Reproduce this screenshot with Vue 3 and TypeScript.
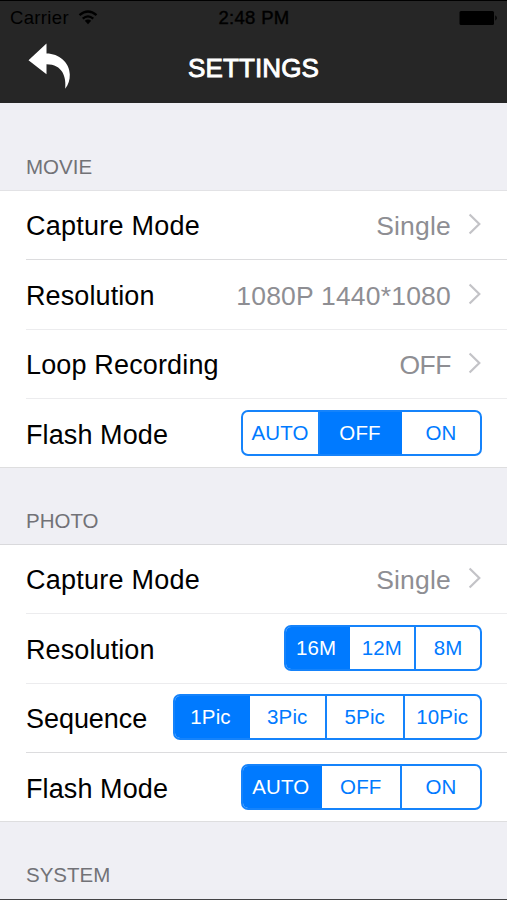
<script setup lang="ts">
import { reactive } from 'vue'

interface Row {
  label: string
  key: string
  value?: string
  options?: string[]
  selected?: number
  widths?: number[]
}

interface Section {
  title: string
  key: string
  rows: Row[]
}

const sections = reactive<Section[]>([
  {
    title: 'MOVIE',
    key: 'movie',
    rows: [
      { label: 'Capture Mode', key: 'capture', value: 'Single' },
      { label: 'Resolution', key: 'resolution', value: '1080P 1440*1080' },
      { label: 'Loop Recording', key: 'loop', value: 'OFF' },
      { label: 'Flash Mode', key: 'flash', options: ['AUTO', 'OFF', 'ON'], selected: 1, widths: [77, 82, 78] },
    ],
  },
  {
    title: 'PHOTO',
    key: 'photo',
    rows: [
      { label: 'Capture Mode', key: 'capture', value: 'Single' },
      { label: 'Resolution', key: 'resolution', options: ['16M', '12M', '8M'], selected: 0, widths: [64, 66.5, 64] },
      { label: 'Sequence', key: 'sequence', options: ['1Pic', '3Pic', '5Pic', '10Pic'], selected: 0, widths: [75, 77.5, 77.5, 75.5] },
      { label: 'Flash Mode', key: 'flash', options: ['AUTO', 'OFF', 'ON'], selected: 0, widths: [78.5, 80.5, 78] },
    ],
  },
])
</script>

<template>
  <main class="screen">
    <header class="header">
      <div class="status">
        <div class="carrier">
          <span>Carrier</span>
          <svg class="wifi" width="20" height="15" viewBox="0 0 20 15">
            <path d="M1.5 5.2Q10 -2.2 18.5 5.2M4.7 8.6Q10 4.2 15.3 8.6" fill="none" stroke="#000" stroke-width="2.3" />
            <path d="M6.8 10.8Q10 8.2 13.2 10.8L10 14.2Z" fill="#000" />
          </svg>
        </div>
        <span class="clock">2:48 PM</span>
        <svg class="battery" width="39" height="15" viewBox="0 0 39 15">
          <rect x="0.5" y="0" width="34.5" height="14" rx="1.5" />
          <path d="M36.3 4.3Q39.4 7 36.3 9.7Z" />
        </svg>
      </div>
      <div class="nav">
        <button class="back" aria-label="Back">
          <svg width="43" height="47" viewBox="0 0 43 47">
            <path d="M0.5 17.3 18.5 0.5V10.6C31 10.7 41.5 19.5 41.8 31.5C41.9 37 40.5 41.5 37.2 45.8C38.6 34 34.5 21.2 18.5 21.2V31.2Z" fill="#fff" />
          </svg>
        </button>
        <h1 class="title">SETTINGS</h1>
      </div>
    </header>
    <section v-for="section in sections" :key="section.key" class="group" :class="section.key">
      <h2 class="heading"><span>{{ section.title }}</span></h2>
      <div class="rows">
        <div v-for="row in section.rows" :key="row.key" class="row" :class="row.key">
          <span class="label">{{ row.label }}</span>
          <div v-if="row.options" class="segments">
            <button
              v-for="(option, i) in row.options"
              :key="option"
              class="segment"
              :class="{ active: row.selected === i }"
              :style="{ width: row.widths![i] + 'px' }"
              @click="row.selected = i"
            >{{ option }}</button>
          </div>
          <div v-else class="detail">
            <span>{{ row.value }}</span>
            <svg width="14" height="22" viewBox="0 0 14 22">
              <path d="M1.6 1.5 11.3 11 1.6 20.5" fill="none" stroke="#c3c3c7" stroke-width="2.2" />
            </svg>
          </div>
        </div>
      </div>
    </section>
    <section class="group system">
      <h2 class="heading"><span>SYSTEM</span></h2>
    </section>
  </main>
</template>

<style>
body {
  margin: 0;
  background: #efeff4;
}
</style>

<style scoped>
.screen {
  width: 507px;
  height: 900px;
  box-sizing: border-box;
  overflow: hidden;
  border-bottom: 1px solid #434345;
  background: #efeff4;
  color: #000;
  font-family: "Liberation Sans", Arial, sans-serif;
}
button {
  padding: 0;
  border: 0;
  background: none;
  font: inherit;
}
.header {
  height: 102.5px;
  box-sizing: border-box;
  border-top: 1.5px solid #000;
  background: #262626;
}
.status {
  display: grid;
  grid-template-columns: 1fr auto 1fr;
  align-items: center;
  height: 34px;
  padding: 0 9px 0 10px;
  font-size: 18.5px;
}
.carrier {
  display: flex;
  align-items: center;
  gap: 9px;
  letter-spacing: 0.35px;
}
.wifi {
  margin-bottom: 2px;
}
.clock {
  letter-spacing: 0.3px;
  -webkit-text-stroke: 0.4px #000;
}
.battery {
  justify-self: end;
}
.nav {
  display: grid;
  grid-template-columns: 1fr auto 1fr;
  align-items: center;
  height: 63px;
  padding: 0 28px;
}
.back {
  justify-self: start;
  width: 43px;
  height: 47px;
}
.back svg {
  display: block;
}
.title {
  margin: 2px 0 0;
  color: #fff;
  font-size: 26px;
  font-weight: 400;
  line-height: 30px;
  letter-spacing: 0.1px;
  -webkit-text-stroke: 0.9px #fff;
}
.heading {
  display: flex;
  align-items: flex-end;
  box-sizing: border-box;
  height: 76px;
  margin: 0;
  padding: 0 26px 11px;
  color: #727277;
  font-size: 20.5px;
  font-weight: 400;
  line-height: 24px;
}
.movie .heading {
  height: 87.5px;
}
.rows {
  height: 278px;
  box-sizing: border-box;
  border-top: 1px solid #d9d9dc;
  border-bottom: 1px solid #dededf;
  background: #fff;
}
.movie .rows {
  border-top-color: #e2e2e5;
}
.row {
  display: flex;
  align-items: center;
  justify-content: space-between;
  height: 69.4px;
  box-sizing: border-box;
  margin-left: 26px;
  padding-right: 25px;
  border-bottom: 1px solid #ececee;
}
.movie .capture,
.photo .sequence {
  border-bottom-color: #dcdcde;
}
.row:last-child {
  border-bottom: 0;
}
.label {
  padding-top: 3px;
  font-size: 27px;
  letter-spacing: 0.1px;
}
.capture .label {
  padding-top: 2px;
  letter-spacing: 0.25px;
}
.loop .label {
  padding-top: 4px;
  letter-spacing: 0.15px;
}
.sequence .label {
  padding-top: 4px;
  letter-spacing: -0.05px;
}
.detail {
  display: flex;
  align-items: center;
  gap: 17px;
  color: #8e8e93;
  font-size: 26.5px;
}
.detail span {
  padding-top: 2px;
  letter-spacing: 0.2px;
}
.resolution .detail span {
  padding-top: 3px;
}
.loop .detail span {
  padding-top: 4px;
  letter-spacing: -0.5px;
}
.detail svg {
  margin-bottom: 2px;
}
.segments {
  display: flex;
  box-sizing: border-box;
  height: 46px;
  margin-bottom: 1px;
  overflow: hidden;
  border: 2px solid #1583fb;
  border-radius: 7px;
}
.segment {
  box-sizing: border-box;
  flex: 0 1 auto;
  border-right: 2px solid #1583fb;
  color: #007aff;
  font-size: 20.5px;
  letter-spacing: 0.1px;
}
.segment:first-child {
  padding-right: 1px;
}
.segment:last-child {
  border-right: 0;
}
.segment.active {
  border-right-color: #007aff;
  background: #007aff;
  color: #fff;
}
</style>
